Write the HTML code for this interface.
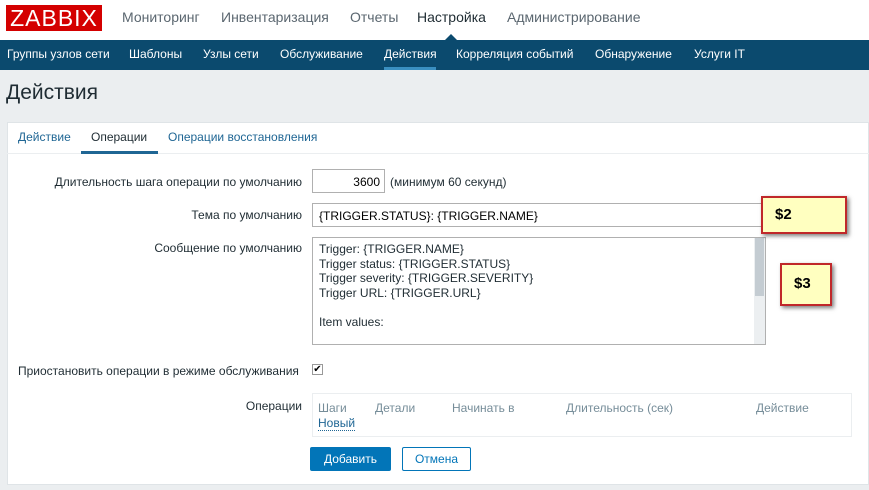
<html><head><style>
body{margin:0;width:869px;height:490px;overflow:hidden;background:#ebeef0;font-family:"Liberation Sans",sans-serif;position:relative}
.a{position:absolute;white-space:nowrap}
.top{position:absolute;left:0;top:0;width:869px;height:40px;background:#fff}
.nav{position:absolute;left:0;top:40px;width:869px;height:30px;background:#0b4a6e}
.lbl{position:absolute;right:567px;font-size:12px;color:#1f2c33;white-space:nowrap}
.note{position:absolute;background:#ffffc0;border:2px solid #c0282a;box-shadow:2px 2px 4px rgba(0,0,0,.5);font-weight:bold;font-size:15px;color:#000}
</style></head><body>
<div class="top"></div>
<div class="a" style="left:6px;top:5px;width:96px;height:26px;background:#d40000;color:#fff;font-size:23px;line-height:26px;text-align:center;letter-spacing:1px">ZABBIX</div>
<div class="a" style="left:122px;top:9px;font-size:14px;color:#5b6770">Мониторинг</div>
<div class="a" style="left:221px;top:9px;font-size:14px;color:#5b6770">Инвентаризация</div>
<div class="a" style="left:350px;top:9px;font-size:14px;color:#5b6770">Отчеты</div>
<div class="a" style="left:417px;top:9px;font-size:14px;color:#1f2c33">Настройка</div>
<div class="a" style="left:507px;top:9px;font-size:14px;color:#5b6770">Администрирование</div>
<div class="nav"></div>
<div class="a" style="left:445px;top:34px;width:0;height:0;border-left:6px solid transparent;border-right:6px solid transparent;border-bottom:6px solid #0b4a6e"></div>
<div class="a" style="left:7px;top:47px;font-size:12px;color:#fff">Группы узлов сети</div>
<div class="a" style="left:129px;top:47px;font-size:12px;color:#fff">Шаблоны</div>
<div class="a" style="left:203px;top:47px;font-size:12px;color:#fff">Узлы сети</div>
<div class="a" style="left:280px;top:47px;font-size:12px;color:#fff">Обслуживание</div>
<div class="a" style="left:384px;top:47px;font-size:12px;color:#fff">Действия</div>
<div class="a" style="left:384px;top:67px;width:52px;height:3px;background:#3a8fc0"></div>
<div class="a" style="left:456px;top:47px;font-size:12px;color:#fff">Корреляция событий</div>
<div class="a" style="left:595px;top:47px;font-size:12px;color:#fff">Обнаружение</div>
<div class="a" style="left:694px;top:47px;font-size:12px;color:#fff">Услуги IT</div>
<div class="a" style="left:6px;top:81px;font-size:21px;color:#1f2c33">Действия</div>
<div class="a" style="left:7px;top:122px;width:862px;height:363px;background:#fff;border:1px solid #dfe4e7;box-sizing:border-box"></div>
<div class="a" style="left:7px;top:153px;width:862px;height:1px;background:#ebeef0"></div>
<div class="a" style="left:18px;top:130px;font-size:12px;color:#1f6694">Действие</div>
<div class="a" style="left:91px;top:130px;font-size:12px;color:#1f2c33">Операции</div>
<div class="a" style="left:81px;top:151px;width:77px;height:3px;background:#1f6694"></div>
<div class="a" style="left:168px;top:130px;font-size:12px;color:#1f6694">Операции восстановления</div>
<div class="lbl" style="top:175px">Длительность шага операции по умолчанию</div>
<div class="a" style="left:312px;top:169px;width:73px;height:24px;border:1px solid #b0b0b0;box-sizing:border-box;font-size:12px;text-align:right;padding:5px 4px 0 0">3600</div>
<div class="a" style="left:390px;top:175px;font-size:12px;color:#1f2c33">(минимум 60 секунд)</div>
<div class="lbl" style="top:208px">Тема по умолчанию</div>
<div class="a" style="left:312px;top:203px;width:460px;height:24px;border:1px solid #b0b0b0;box-sizing:border-box;font-size:12px;padding:5px 0 0 6px">{TRIGGER.STATUS}: {TRIGGER.NAME}</div>
<div class="lbl" style="top:241px">Сообщение по умолчанию</div>
<div class="a" style="left:312px;top:237px;width:454px;height:108px;border:1px solid #b0b0b0;box-sizing:border-box;font-size:12px;line-height:14.5px;padding:4px 0 0 6px;overflow:hidden;color:#1f2c33">Trigger: {TRIGGER.NAME}<br>Trigger status: {TRIGGER.STATUS}<br>Trigger severity: {TRIGGER.SEVERITY}<br>Trigger URL: {TRIGGER.URL}<br><br>Item values:<br><br>1. {ITEM.NAME1} ({HOST.NAME1}:{ITEM.KEY1}): {ITEM.VALUE1}</div>
<div class="a" style="left:754px;top:238px;width:11px;height:106px;background:#eceff1"></div>
<div class="a" style="left:755px;top:238px;width:9px;height:58px;background:#c4ccd2"></div>
<div class="note" style="left:761px;top:196px;width:86px;height:38px;padding:8px 0 0 12px;box-sizing:border-box">$2</div>
<div class="note" style="left:780px;top:263px;width:52px;height:43px;padding:10px 0 0 12px;box-sizing:border-box">$3</div>
<div class="a" style="left:18px;top:364px;font-size:12px;color:#1f2c33">Приостановить операции в режиме обслуживания</div>
<div class="a" style="left:312px;top:364px;width:11px;height:11px;border:1px solid #999;box-sizing:border-box;font-size:10px;line-height:9px;text-align:center">✔</div>
<div class="lbl" style="top:399px">Операции</div>
<div class="a" style="left:312px;top:393px;width:540px;height:44px;border:1px solid #ebeef0;box-sizing:border-box"></div>
<div class="a" style="left:318px;top:401px;font-size:12px;color:#768d99">Шаги</div>
<div class="a" style="left:375px;top:401px;font-size:12px;color:#768d99">Детали</div>
<div class="a" style="left:452px;top:401px;font-size:12px;color:#768d99">Начинать в</div>
<div class="a" style="left:566px;top:401px;font-size:12px;color:#768d99">Длительность (сек)</div>
<div class="a" style="left:756px;top:401px;font-size:12px;color:#768d99">Действие</div>
<div class="a" style="left:318px;top:416px;font-size:12px;color:#1f6694;border-bottom:1px dotted #1f6694">Новый</div>
<div class="a" style="left:310px;top:447px;width:81px;height:24px;background:#0275b8;border-radius:2px;color:#fff;font-size:12px;text-align:center;line-height:24px">Добавить</div>
<div class="a" style="left:402px;top:447px;width:69px;height:24px;border:1px solid #0275b8;box-sizing:border-box;border-radius:2px;color:#0275b8;font-size:12px;text-align:center;line-height:22px">Отмена</div>
</body></html>
